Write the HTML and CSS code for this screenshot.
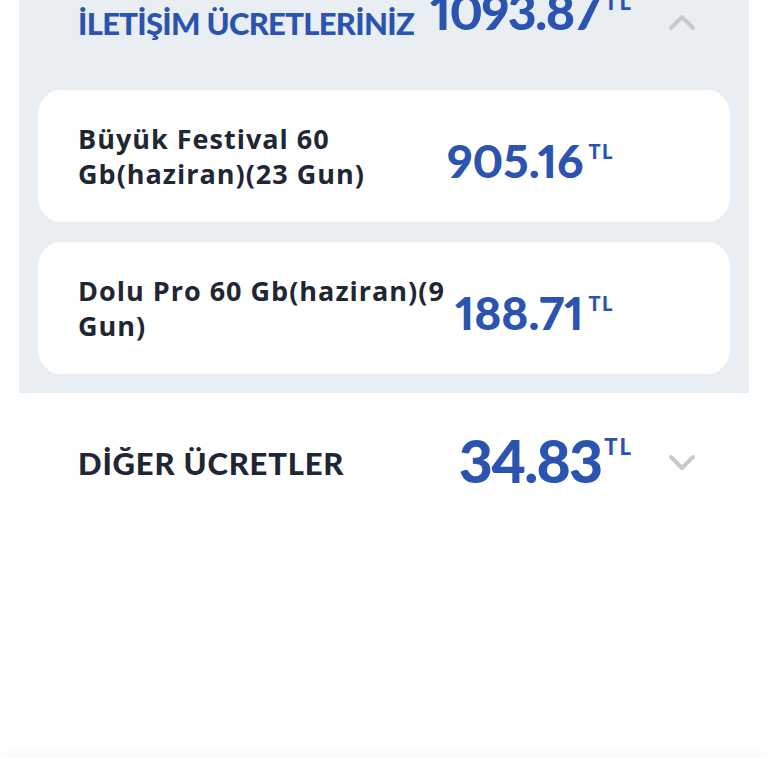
FILE: index.html
```html
<!DOCTYPE html>
<html lang="tr">
<head>
  <meta charset="UTF-8" />
  <meta name="viewport" content="width=device-width, initial-scale=1" />
  <title>Ücretler</title>
  <link rel="stylesheet" href="styles.css">
</head>
<body>
  <div class="page">
    <section class="group group-open">
      <div class="group-head">
        <h2 class="group-title title-blue">İLETİŞİM ÜCRETLERİNİZ</h2>
        <div class="amount amount-head amount-lift">1093.87<span class="cur">TL</span></div>
        <svg class="chevron chevron-up" width="28" height="18" viewBox="0 0 28 18">
          <polyline points="3,15 14,4 25,15" />
        </svg>
      </div>

      <div class="card">
        <div class="item-name">Büyük Festival 60 Gb(haziran)(23 Gun)</div>
        <div class="amount amount-item">905.16<span class="cur">TL</span></div>
      </div>

      <div class="card">
        <div class="item-name">Dolu Pro 60 Gb(haziran)(9 Gun)</div>
        <div class="amount amount-item">188.71<span class="cur">TL</span></div>
      </div>
    </section>

    <section class="group">
      <div class="group-head">
        <h2 class="group-title">DİĞER ÜCRETLER</h2>
        <div class="amount amount-head amount-other">34.83<span class="cur">TL</span></div>
        <svg class="chevron" width="28" height="18" viewBox="0 0 28 18">
          <polyline points="3,3 14,14 25,3" />
        </svg>
      </div>
    </section>
  </div>

  <div class="bottom-bar"></div>
</body>
</html>
```

FILE: styles.css
```css
body {
  margin: 0;
  background: #fff;
  font-family: 'Lato', 'Noto Sans', sans-serif;
  color: #1e2733;
  overflow: hidden;
}

.page {
  height: 768px;
  padding-top: 1px;
  margin-top: -1px;
}

.group {
  margin: 0 19px;
  padding: 0 19px;
}

.group-open {
  background: #e9eef2;
  margin-top: -40px;
  padding-bottom: 19px;
}

.group-head {
  display: flex;
  align-items: center;
  height: 130px;
  padding: 0 34px 0 40px;
}

.group + .group .group-head {
  height: 96px;
  margin-top: 22px;
}

.group-title {
  flex: 1;
  min-width: 0;
  margin: 0;
  font-size: 31px;
  font-weight: 900;
  letter-spacing: 0.8px;
  white-space: nowrap;
}

.title-blue {
  color: #2b53b0;
  letter-spacing: -0.7px;
  margin-bottom: 4px;
}

.amount {
  color: #2b53b0;
  font-weight: 900;
  display: flex;
  align-items: flex-start;
  line-height: 1;
  font-variant-numeric: proportional-nums;
  flex-shrink: 0;
}

.amount-head {
  font-size: 59px;
  letter-spacing: -2px;
  margin-right: 35px;
}

.amount-lift {
  font-size: 50px;
  letter-spacing: -1.5px;
  margin-bottom: 28px;
}

.amount-lift .cur {
  margin-left: 5px;
}

.amount-other {
  margin-bottom: 6px;
}

.amount-item {
  font-size: 46px;
  letter-spacing: 0;
  margin-top: 10px;
}

.cur {
  font-size: 22px;
  letter-spacing: 2px;
  margin-left: 3px;
  margin-top: 5px;
}

.amount-item .cur {
  font-size: 20px;
  letter-spacing: 1.5px;
  margin-left: 5px;
  margin-top: 3px;
}

.chevron {
  flex-shrink: 0;
}

.chevron-up {
  margin-bottom: 6px;
}

.chevron polyline {
  fill: none;
  stroke: #c9c9c9;
  stroke-width: 4;
  stroke-linecap: round;
  stroke-linejoin: round;
}

.card {
  background: #fff;
  border-radius: 24px;
  height: 132px;
  display: flex;
  align-items: center;
  padding: 0 116px 0 40px;
  margin-bottom: 20px;
}

.card:last-child {
  margin-bottom: 0;
}

.item-name {
  flex: 1;
  max-width: 376px;
  font-family: 'Open Sans', 'Noto Sans', sans-serif;
  font-size: 27px;
  font-weight: 700;
  line-height: 35px;
  letter-spacing: 1px;
}

.card .amount {
  margin-left: auto;
}

.bottom-bar {
  position: fixed;
  left: 0;
  right: 0;
  bottom: 0;
  height: 11px;
  background: #fff;
  box-shadow: 0 -5px 9px rgba(0, 0, 0, 0.025);
}
```
